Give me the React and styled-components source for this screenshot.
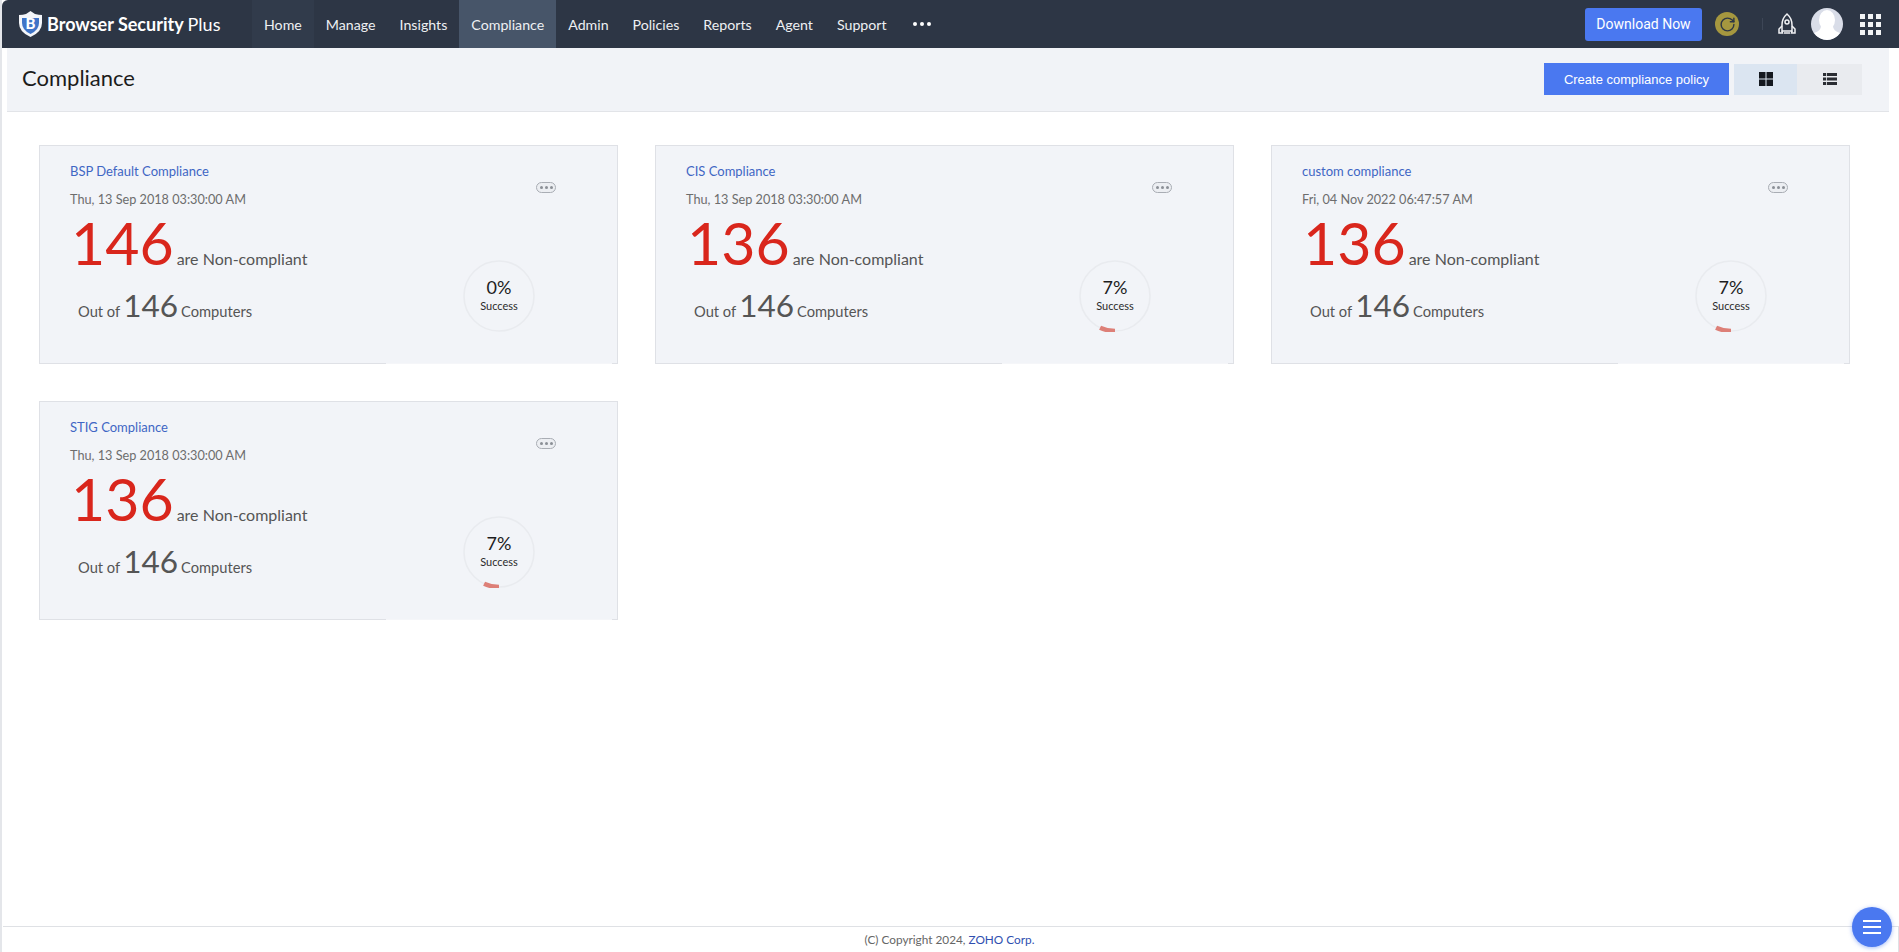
import styled, { createGlobalStyle } from "styled-components";
import { RotateCw } from "lucide-react";

const GlobalStyle = createGlobalStyle`
  html, body {
    margin: 0;
    padding: 0;
    background: #fff;
    font-family: Lato, "Liberation Sans", sans-serif;
    overflow: hidden;
  }
  * { box-sizing: border-box; }
`;

const Shell = styled.div`
  display: flex;
  flex-direction: column;
  height: 952px;
  border-left: 2px solid #e4e6ea;
`;

const TopBar = styled.header`
  display: flex;
  align-items: center;
  flex: none;
  height: 48px;
  background: #2d3645;
  border-top-left-radius: 6px;
  color: #fff;
`;

const Brand = styled.div`
  display: flex;
  align-items: center;
  gap: 4px;
  width: 250px;
  padding-left: 16px;
  font-size: 18px;
  font-weight: 700;
  white-space: nowrap;
  span { font-weight: 400; }
`;

const Menu = styled.nav`
  display: flex;
  align-items: stretch;
  height: 48px;
`;

const MenuItem = styled.a`
  display: flex;
  align-items: center;
  padding: 0 12px;
  font-size: 14.2px;
  color: #eef0f3;
  background: ${(props) => (props.active ? "#475569" : props.hovered ? "#313b4b" : "transparent")};
`;

const MoreDots = styled.div`
  display: flex;
  align-items: center;
  gap: 3px;
  margin-left: 14px;
  i {
    width: 4px;
    height: 4px;
    border-radius: 50%;
    background: #fff;
  }
`;

const TopRight = styled.div`
  display: flex;
  align-items: center;
  margin-left: auto;
  padding-right: 18px;
`;

const DownloadButton = styled.button`
  width: 117px;
  height: 33px;
  border: 0;
  border-radius: 3px;
  background: #4a78f0;
  color: #fff;
  font-family: Roboto, sans-serif;
  font-size: 14px;
`;

const RefreshBadge = styled.div`
  display: flex;
  align-items: center;
  justify-content: center;
  width: 24px;
  height: 24px;
  margin-left: 13px;
  border-radius: 50%;
  background: #a5973f;
  color: #2d3645;
`;

const Divider = styled.div`
  width: 1px;
  height: 12px;
  margin-left: 23px;
  background: #3d4656;
`;

const RocketBox = styled.div`
  display: flex;
  margin-left: 12px;
`;

const Avatar = styled.div`
  width: 32px;
  height: 32px;
  margin-left: 12px;
  border-radius: 50%;
  overflow: hidden;
`;

const AppsGrid = styled.div`
  display: grid;
  grid-template-columns: repeat(3, 5px);
  gap: 3px;
  margin-left: 17px;
  i { width: 5px; height: 5px; background: #f2f3f5; }
`;

const PageHead = styled.div`
  display: flex;
  align-items: center;
  flex: none;
  height: 64px;
  margin: 0 10px 0 5px;
  padding: 0 27px 1px 15px;
  background: #f1f3f7;
  border-bottom: 1px solid #e2e4e8;
`;

const PageTitle = styled.h1`
  margin: 0 0 4px;
  font-size: 22px;
  font-weight: 400;
  color: #1c1c1c;
`;

const CreateButton = styled.button`
  width: 185px;
  height: 32px;
  margin-left: auto;
  border: 0;
  background: #4a78f0;
  color: #fff;
  font-family: "Liberation Sans", sans-serif;
  font-size: 13px;
`;

const ViewToggle = styled.div`
  display: flex;
  height: 31px;
  margin-left: 5px;
`;

const ToggleCell = styled.div`
  display: flex;
  align-items: center;
  justify-content: center;
  width: ${(props) => (props.selected ? 63 : 65)}px;
  background: ${(props) => (props.selected ? "#dbe5f1" : "#e9ebef")};
`;

const Main = styled.main`
  flex: 1;
  padding: 33px 49px 0 37px;
`;

const CardGrid = styled.div`
  display: grid;
  grid-template-columns: repeat(3, 1fr);
  grid-auto-rows: 219px;
  gap: 37px;
`;

const Card = styled.section`
  position: relative;
  display: flex;
  justify-content: space-between;
  background: #f2f4f8;
  border: 1px solid #dfe1e6;
  &::after {
    content: "";
    position: absolute;
    left: 60%;
    right: 5px;
    bottom: -1px;
    height: 1px;
    background: #f5f6f9;
  }
`;

const CardBody = styled.div`
  padding: 17px 0 0 30px;
`;

const CardTitle = styled.a`
  display: block;
  font-size: 13px;
  line-height: 16px;
  color: #3f66c4;
`;

const CardDate = styled.div`
  margin-top: 12px;
  font-size: 12.7px;
  line-height: 16px;
  color: #6d6d6d;
`;

const BigLine = styled.div`
  display: flex;
  align-items: baseline;
  gap: 3px;
  height: 60px;
  margin: 6px 0 0 1px;
  line-height: 60px;
  font-size: 16px;
  color: #555;
  b {
    font-size: 59px;
    font-weight: 400;
    color: #d9261c;
  }
`;

const CountLine = styled.div`
  display: flex;
  align-items: baseline;
  gap: 3px;
  margin: 12px 0 0 8px;
  line-height: 40px;
  font-size: 14.7px;
  color: #555;
  b {
    font-size: 31.5px;
    font-weight: 400;
  }
`;

const CardSide = styled.div`
  display: flex;
  flex-direction: column;
  align-items: flex-end;
  padding: 36px 61px 0 0;
`;

const MorePill = styled.div`
  display: flex;
  align-items: center;
  justify-content: center;
  gap: 2px;
  width: 20px;
  height: 11px;
  border: 1px solid #a9adb4;
  border-radius: 6px;
  background: #eceef2;
  i {
    width: 3px;
    height: 3px;
    border-radius: 50%;
    background: #8b8f96;
  }
`;

const Donut = styled.div`
  position: relative;
  display: flex;
  flex-direction: column;
  align-items: center;
  justify-content: center;
  gap: 2px;
  width: 72px;
  height: 72px;
  margin: 67px 21px 0 0;
  padding-bottom: 4px;
  svg {
    position: absolute;
    inset: 0;
  }
`;

const DonutValue = styled.div`
  font-size: 18px;
  line-height: 20px;
  color: #1d1d1d;
`;

const DonutLabel = styled.div`
  font-size: 11px;
  line-height: 13px;
  color: #2b2b2b;
`;

const Footer = styled.footer`
  display: flex;
  align-items: center;
  justify-content: center;
  flex: none;
  height: 26px;
  margin-left: 1px;
  padding-right: 2px;
  border-top: 1px solid #dfe1e5;
  border-right: 1px solid #dfe1e5;
  font-size: 11.8px;
  color: #666;
  a {
    margin-left: 3px;
    color: #2f4fb0;
  }
`;

const Fab = styled.button`
  position: fixed;
  right: 7px;
  bottom: 5px;
  display: flex;
  flex-direction: column;
  align-items: center;
  justify-content: center;
  gap: 4px;
  width: 40px;
  height: 40px;
  border: 0;
  border-radius: 50%;
  background: #4a78f0;
  box-shadow: 0 1px 4px rgba(74, 120, 240, 0.5);
  i {
    width: 18px;
    height: 2px;
    background: #fff;
  }
`;

const menuItems = ["Home", "Manage", "Insights", "Compliance", "Admin", "Policies", "Reports", "Agent", "Support"];

const policies = [
  { name: "BSP Default Compliance", date: "Thu, 13 Sep 2018 03:30:00 AM", bad: 146, pct: 0 },
  { name: "CIS Compliance", date: "Thu, 13 Sep 2018 03:30:00 AM", bad: 136, pct: 7 },
  { name: "custom compliance", date: "Fri, 04 Nov 2022 06:47:57 AM", bad: 136, pct: 7 },
  { name: "STIG Compliance", date: "Thu, 13 Sep 2018 03:30:00 AM", bad: 136, pct: 7 },
];

const ShieldLogo = () => (
  <svg width="25" height="28" viewBox="0 0 25 28">
    <path d="M12.5 1 L17 4 Q21 5 24 5 L24 13 Q24 22 12.5 27 Q1 22 1 13 L1 5 Q5 5 8 4 Z" fill="#f4f6fa" />
    <path d="M4 8 H21 V13 Q21 20 12.5 24 Q4 20 4 13 Z" fill="#3f74c8" />
    <text x="12.5" y="19" textAnchor="middle" fontFamily="Lato, sans-serif" fontWeight="900" fontSize="15" fill="#fff">B</text>
  </svg>
);

const RocketIcon = () => (
  <svg width="24" height="26" viewBox="0 0 24 26" fill="none" stroke="#f0f1f3" strokeWidth="1.5">
    <path d="M12 3 C8.5 6 7 10 7 14 L7 20 H17 L17 14 C17 10 15.5 6 12 3 Z" />
    <circle cx="12" cy="11" r="2" />
    <path d="M7 15 L4 18 V22 H7.5 L7 20 M17 15 L20 18 V22 H16.5 L17 20" />
    <path d="M9 22 H15" />
  </svg>
);

const AvatarIcon = () => (
  <svg width="32" height="32" viewBox="0 0 32 32">
    <rect width="32" height="32" fill="#d9dde8" />
    <ellipse cx="16" cy="12" rx="8" ry="10" fill="#fff" />
    <path d="M10 18 Q10 23 3 25 Q8 32 16 32 Q24 32 29 25 Q22 23 22 18 Z" fill="#fff" />
  </svg>
);

const GridIcon = () => (
  <svg width="14" height="14" viewBox="0 0 14 14" fill="#14181f">
    <rect width="6.5" height="6.5" />
    <rect x="7.5" width="6.5" height="6.5" />
    <rect y="7.5" width="6.5" height="6.5" />
    <rect x="7.5" y="7.5" width="6.5" height="6.5" />
  </svg>
);

const ListIcon = () => (
  <svg width="14" height="12" viewBox="0 0 14 12" fill="#2a2d33">
    <rect y="0" width="14" height="3" />
    <rect y="4.5" width="14" height="3" />
    <rect y="9" width="14" height="3" />
    <rect x="3" width="0.8" height="12" fill="#e9ebef" />
  </svg>
);

const Ring = ({ pct }) => {
  const r = 35;
  const full = 2 * Math.PI * r;
  return (
    <svg width="72" height="72" viewBox="0 0 72 72" fill="none">
      <circle cx="36" cy="36" r={r} stroke="#e9ebef" strokeWidth="1.6" />
      {pct > 0 && (
        <circle
          cx="36"
          cy="36"
          r={r}
          stroke="#dd7f77"
          strokeWidth="4.5"
          strokeDasharray={`${(full * pct) / 100} ${full}`}
          transform="rotate(90 36 36)"
        />
      )}
    </svg>
  );
};

const PolicyCard = ({ policy }) => (
  <Card>
    <CardBody>
      <CardTitle>{policy.name}</CardTitle>
      <CardDate>{policy.date}</CardDate>
      <BigLine>
        <b>{policy.bad}</b> are Non-compliant
      </BigLine>
      <CountLine>
        Out of <b>146</b> Computers
      </CountLine>
    </CardBody>
    <CardSide>
      <MorePill>
        <i />
        <i />
        <i />
      </MorePill>
      <Donut>
        <Ring pct={policy.pct} />
        <DonutValue>{policy.pct}%</DonutValue>
        <DonutLabel>Success</DonutLabel>
      </Donut>
    </CardSide>
  </Card>
);

const App = () => (
  <>
    <GlobalStyle />
    <Shell>
      <TopBar>
        <Brand>
          <ShieldLogo />
          <div>
            Browser Security <span>Plus</span>
          </div>
        </Brand>
        <Menu>
          {menuItems.map((item) => (
            <MenuItem key={item} active={item === "Compliance"} hovered={item === "Home"}>
              {item}
            </MenuItem>
          ))}
        </Menu>
        <MoreDots>
          <i />
          <i />
          <i />
        </MoreDots>
        <TopRight>
          <DownloadButton>Download Now</DownloadButton>
          <RefreshBadge>
            <RotateCw size={17} strokeWidth={2} />
          </RefreshBadge>
          <Divider />
          <RocketBox>
            <RocketIcon />
          </RocketBox>
          <Avatar>
            <AvatarIcon />
          </Avatar>
          <AppsGrid>
            {Array.from({ length: 9 }).map((_, i) => (
              <i key={i} />
            ))}
          </AppsGrid>
        </TopRight>
      </TopBar>
      <PageHead>
        <PageTitle>Compliance</PageTitle>
        <CreateButton>Create compliance policy</CreateButton>
        <ViewToggle>
          <ToggleCell selected>
            <GridIcon />
          </ToggleCell>
          <ToggleCell>
            <ListIcon />
          </ToggleCell>
        </ViewToggle>
      </PageHead>
      <Main>
        <CardGrid>
          {policies.map((policy) => (
            <PolicyCard key={policy.name} policy={policy} />
          ))}
        </CardGrid>
      </Main>
      <Footer>
        (C) Copyright 2024, <a>ZOHO Corp.</a>
      </Footer>
    </Shell>
    <Fab>
      <i />
      <i />
      <i />
    </Fab>
  </>
);

export default App;
